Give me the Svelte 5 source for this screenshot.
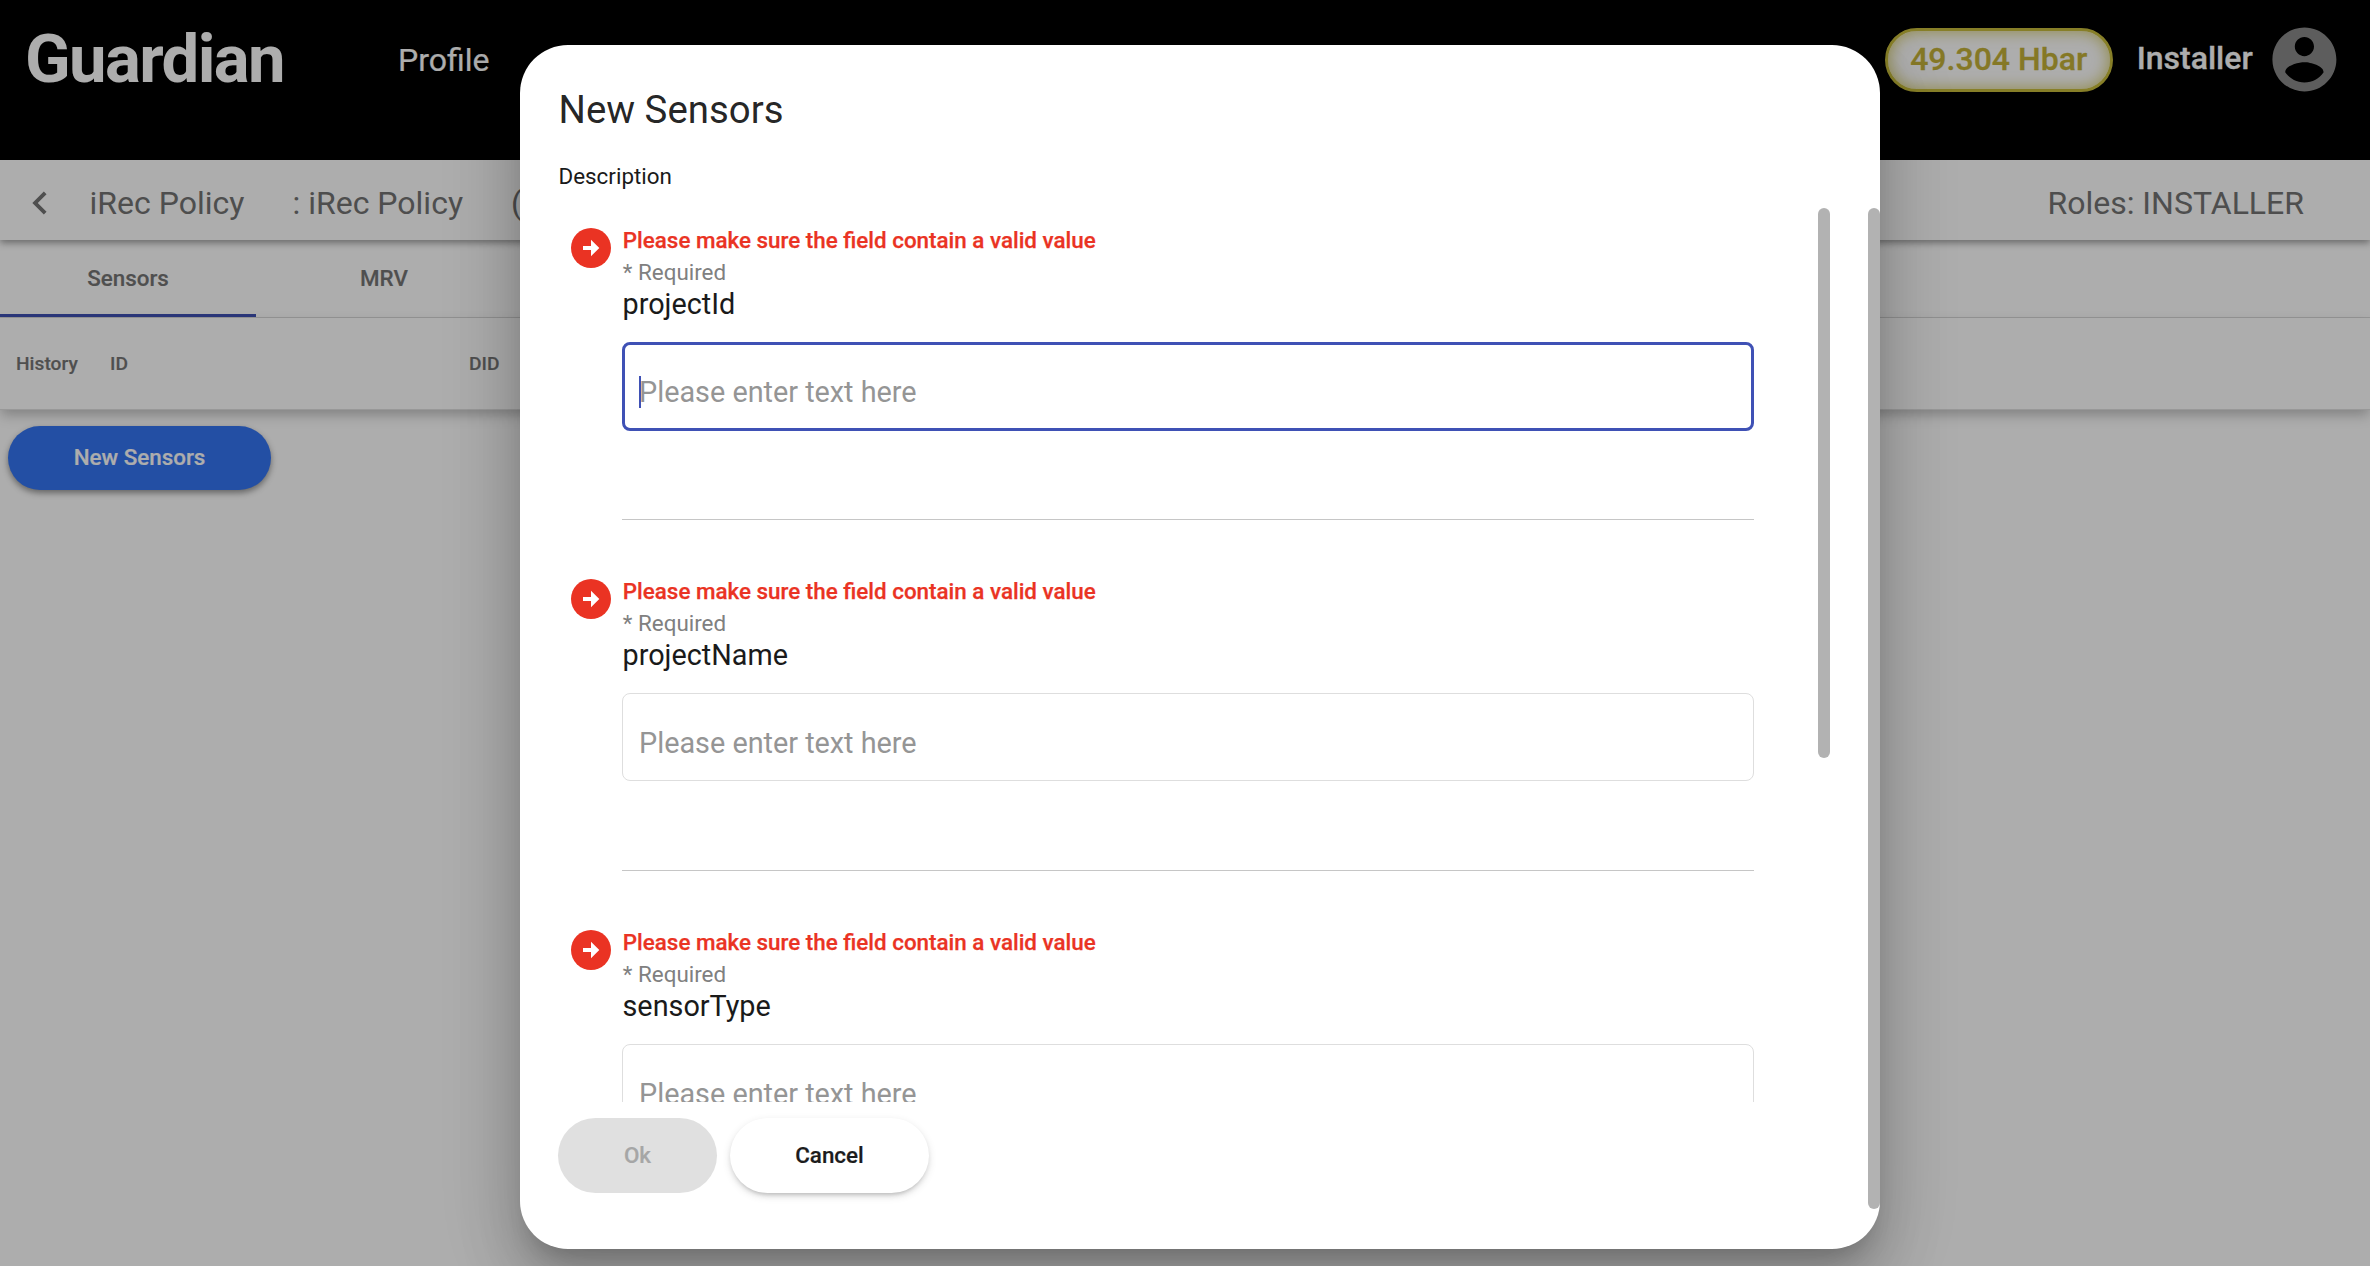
<script>
  const fields = ['projectId', 'projectName', 'sensorType'];
</script>

<div class="page">
  <header class="topbar">
    <div class="brand">Guardian</div>
    <nav><a class="profile">Profile</a></nav>
    <div class="account">
      <div class="balance">49.304 Hbar</div>
      <div class="user">Installer</div>
      <svg class="avatar" viewBox="0 0 24 24" fill="#8a8a8a">
        <path d="M12 2C6.48 2 2 6.48 2 12s4.48 10 10 10 10-4.48 10-10S17.520 2 12 2zm0 3c1.660 0 3 1.340 3 3s-1.340 3-3 3-3-1.340-3-3 1.340-3 3-3zm0 14.200c-2.500 0-4.710-1.280-6-3.220.030-1.990 4-3.080 6-3.080 1.990 0 5.970 1.090 6 3.080-1.290 1.940-3.500 3.220-6 3.220z" />
      </svg>
    </div>
  </header>

  <div class="policybar">
    <svg class="back" viewBox="0 0 24 24" fill="#757575">
      <path d="M15.410 7.410 14 6l-6 6 6 6 1.410-1.410L10.830 12z" />
    </svg>
    <span class="name">iRec Policy</span>
    <span class="topic">: iRec Policy</span>
    <span class="version">(</span>
    <span class="roles">Roles: INSTALLER</span>
  </div>

  <div class="tabs">
    <div class="tab active">Sensors</div>
    <div class="tab">MRV</div>
  </div>

  <div class="thead">
    <span class="th history">History</span>
    <span class="th id">ID</span>
    <span class="th">DID</span>
  </div>

  <button class="create">New Sensors</button>
</div>

<div class="overlay">
  <section class="dialog">
    <h1>New Sensors</h1>
    <p class="description">Description</p>
    <div class="scroller">
      <div class="fields">
        {#each fields as field, i}
          <div class="field">
            <svg class="badge" viewBox="0 0 40 40">
              <circle cx="20" cy="20" r="20" fill="#ea3323" />
              <path d="M12 18h8v-6.200l8.300 8.200-8.300 8.200V22h-8z" fill="#fff" />
            </svg>
            <div class="body">
              <div class="error">Please make sure the field contain a valid value</div>
              <div class="required">* Required</div>
              <div class="label">{field}</div>
              <div class="input" class:focused={i === 0}>
                {#if i === 0}<i class="caret"></i>{/if}
                <span>Please enter text here</span>
              </div>
            </div>
          </div>
        {/each}
      </div>
      <div class="thumb"></div>
    </div>
    <div class="actions">
      <button class="ok" disabled>Ok</button>
      <button class="cancel">Cancel</button>
    </div>
    <div class="outer-thumb"></div>
  </section>
</div>

<style>
  :global(body) {
    overflow: hidden;
  }
  .page,
  .overlay {
    box-sizing: border-box;
    width: 2370px;
    height: 1266px;
    font-family: Roboto, sans-serif;
    overflow: hidden;
  }
  .page *,
  .overlay * {
    box-sizing: border-box;
  }
  .page {
    background: #fff;
    display: flex;
    flex-direction: column;
  }
  button {
    font-family: inherit;
    border: 0;
    padding: 0;
  }
  .topbar {
    height: 160px;
    flex: none;
    background: #000;
    color: #fff;
    display: flex;
    align-items: flex-start;
    padding: 0 27px 0 25px;
  }
  .brand {
    width: 373px;
    font-size: 67px;
    font-weight: 700;
    line-height: 80px;
    padding-top: 19px;
    letter-spacing: -1.600px;
  }
  .profile {
    display: block;
    font-size: 32px;
    line-height: 38px;
    margin-top: 41px;
    -webkit-text-stroke: 0.2px;
  }
  .account {
    margin-left: auto;
    display: flex;
    align-items: center;
    height: 76px;
    margin-top: 21px;
  }
  .balance {
    width: 228px;
    height: 64px;
    margin-top: 2px;
    border: 3px solid #c8bc3c;
    border-radius: 32px;
    background: #fff;
    box-shadow: inset 0 0 16px rgba(200, 188, 60, 0.8);
    color: #c4b238;
    font-size: 32px;
    font-weight: 500;
    line-height: 56px;
    text-align: center;
    -webkit-text-stroke: 0.3px;
  }
  .user {
    font-size: 32px;
    font-weight: 500;
    margin: 0 13.500px 3px 24px;
    -webkit-text-stroke: 0.3px;
  }
  .avatar {
    width: 76.800px;
    height: 76.800px;
  }
  .policybar {
    height: 80px;
    flex: none;
    position: relative;
    display: flex;
    align-items: center;
    font-size: 32px;
    color: #737373;
    padding: 6px 66px 0 17px;
    box-shadow: 0 3px 7px rgba(0, 0, 0, 0.38);
    white-space: nowrap;
  }
  .back {
    width: 46px;
    height: 46px;
    margin-right: 26.500px;
  }
  .name {
    width: 203px;
  }
  .topic {
    width: 218.500px;
  }
  .roles {
    margin-left: auto;
  }
  .tabs {
    height: 78px;
    flex: none;
    display: flex;
    border-bottom: 1px solid #dcdcdc;
  }
  .tab {
    width: 256px;
    height: 77px;
    font-size: 22.400px;
    font-weight: 500;
    color: #757575;
    text-align: center;
    line-height: 77px;
    -webkit-text-stroke: 0.15px;
  }
  .tab.active {
    border-bottom: 3px solid #3f51b5;
  }
  .thead {
    height: 92px;
    flex: none;
    display: flex;
    align-items: center;
    padding: 1px 0 1px 16px;
    font-size: 19.200px;
    font-weight: 500;
    color: #757575;
    -webkit-text-stroke: 0.15px;
    border-bottom: 1px solid #e0e0e0;
    box-shadow: 0 6px 12px -1px rgba(0, 0, 0, 0.25);
  }
  .history {
    width: 94px;
  }
  .id {
    width: 359px;
  }
  .create {
    width: 263px;
    height: 64px;
    margin: 16px 0 0 8px;
    padding-bottom: 2px;
    border-radius: 32px;
    background: #3475f2;
    color: #fff;
    font-size: 22.400px;
    font-weight: 500;
    -webkit-text-stroke: 0.2px;
    box-shadow: 0 3px 6px rgba(0, 0, 0, 0.42);
  }
  .overlay {
    position: absolute;
    inset: 0;
    background: rgba(0, 0, 0, 0.32);
    padding: 45px 0 0 520px;
  }
  .dialog {
    position: relative;
    width: 1360px;
    height: 1204px;
    padding: 38px;
    border-radius: 48px;
    background: #fff;
    color: rgba(0, 0, 0, 0.87);
    overflow: visible;
    box-shadow:
      0 17.600px 24px -11.200px rgba(0, 0, 0, 0.2),
      0 38.400px 60.800px 4.800px rgba(0, 0, 0, 0.14),
      0 14.400px 73.600px 12.800px rgba(0, 0, 0, 0.12);
  }
  h1 {
    margin: 0;
    padding: 1px 0 0 0.500px;
    font-size: 38.400px;
    font-weight: 400;
    line-height: 52px;
  }
  .description {
    margin: 25px 0 0;
    padding-left: 0.500px;
    font-size: 22.400px;
    line-height: 30px;
    height: 47px;
    color: #1a1a1a;
  }
  .scroller {
    display: flex;
    justify-content: space-between;
    height: 894px;
    width: 1272px;
    overflow: hidden;
  }
  .fields {
    width: 1196px;
  }
  .field {
    display: flex;
    height: 351px;
    padding: 16px 0 0 12.500px;
  }
  .badge {
    width: 40px;
    height: 40px;
    margin: 4px 11.500px 0 0;
    flex: none;
  }
  .body {
    width: 1132px;
    height: 296px;
    border-bottom: 1px solid #c6c6c6;
  }
  .error,
  .required {
    font-size: 22.400px;
    line-height: 32px;
    padding-left: 0.800px;
  }
  .error {
    color: #ea3323;
    font-weight: 500;
    -webkit-text-stroke: 0.25px;
  }
  .required {
    color: #808080;
  }
  .label {
    font-size: 28.800px;
    line-height: 32px;
    height: 54px;
    padding-left: 0.500px;
    color: #1a1a1a;
  }
  .input {
    height: 88px;
    border: 1px solid #dedede;
    border-radius: 8px;
    padding: 11px 0 0 16px;
    font-size: 28.800px;
    color: #959595;
    display: flex;
    align-items: center;
  }
  .input.focused {
    height: 89px;
    border: 3px solid #3f51b5;
    padding: 10px 0 0 14px;
  }
  .caret {
    width: 2px;
    height: 32px;
    background: #3f51b5;
    margin-right: -2px;
  }
  .thumb,
  .outer-thumb {
    width: 12px;
    border-radius: 6px;
    background: #b2b2b2;
  }
  .thumb {
    height: 550px;
  }
  .outer-thumb {
    position: absolute;
    right: 0;
    top: 163px;
    height: 1001px;
  }
  .actions {
    display: flex;
    gap: 13px;
    margin-top: 16px;
  }
  .actions button {
    height: 75px;
    padding-bottom: 2px;
    border-radius: 37.500px;
    font-size: 22.400px;
    font-weight: 500;
    -webkit-text-stroke: 0.2px;
  }
  .ok {
    width: 159px;
    background: #e0e0e0;
    color: #a6a6a6;
  }
  .cancel {
    width: 199px;
    background: #fff;
    color: #1c1c1c;
    box-shadow:
      0 4.800px 3px -3.200px rgba(0, 0, 0, 0.1),
      0 3.200px 4px rgba(0, 0, 0, 0.07),
      0 3px 9px rgba(0, 0, 0, 0.12);
  }
</style>
